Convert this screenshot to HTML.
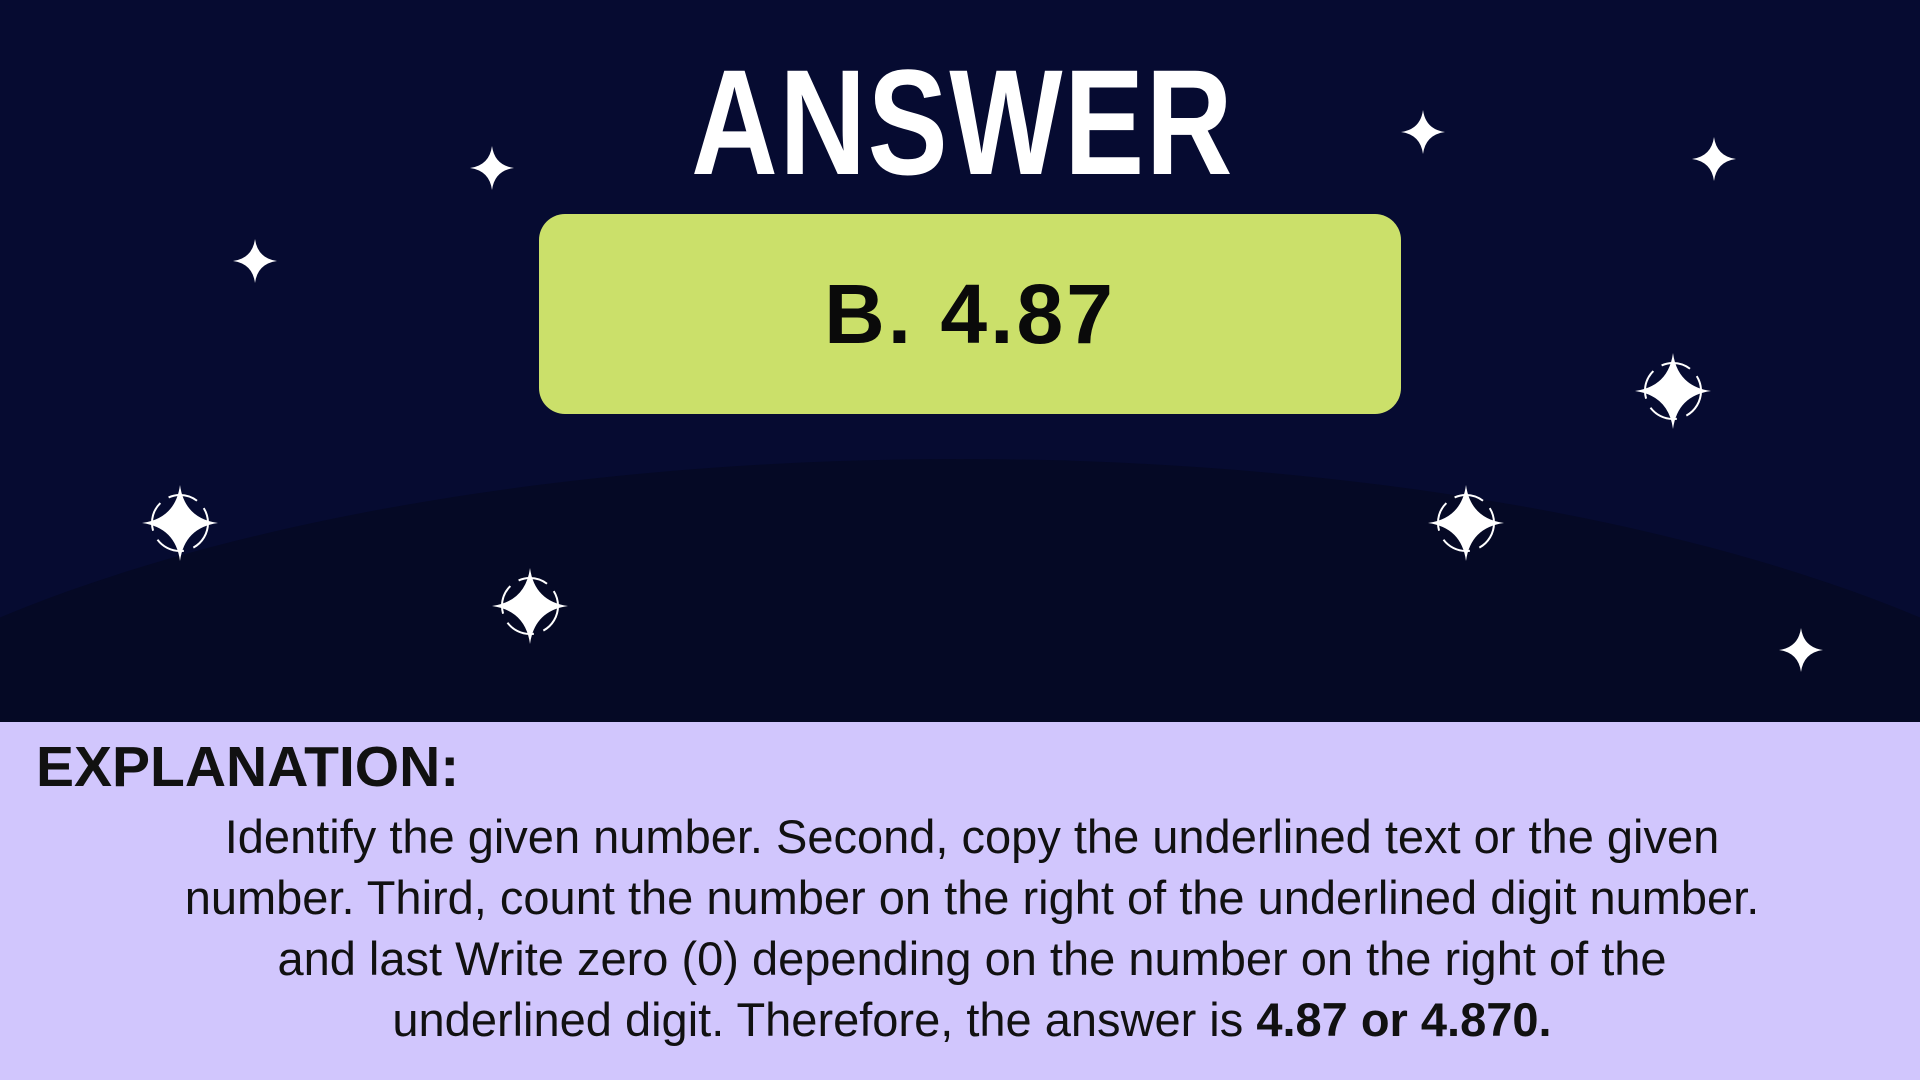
<!DOCTYPE html>
<html><head><meta charset="utf-8"><style>
html,body{margin:0;padding:0;width:1920px;height:1080px;overflow:hidden}
body{position:relative;background:#060b31;font-family:"Liberation Sans",sans-serif}
.sky{position:absolute;left:0;top:0;width:1920px;height:722px;overflow:hidden}
.hill{position:absolute;left:-300px;top:459px;width:2520px;height:900px;border-radius:50%;background:#050925}
.title{position:absolute;left:0;width:1920px;top:52px;text-align:center;color:#fff;font-weight:bold;font-size:150px;line-height:140px;transform:scaleX(0.8);transform-origin:973px 0;letter-spacing:2px}
.box{position:absolute;left:539px;top:214px;width:862px;height:200px;border-radius:26px;background:#cbe06a;text-align:center;font-weight:bold;font-size:84px;line-height:200px;color:#0a0a0a;letter-spacing:3px}
.bottom{position:absolute;left:0;top:722px;width:1920px;height:358px;background:#d1c6fd;overflow:hidden}
.exp{position:absolute;left:36px;top:12px;font-size:57px;font-weight:bold;color:#111}
.para{position:absolute;left:0;width:1920px;padding-left:24px;box-sizing:border-box;top:84px;text-align:center;font-size:47px;line-height:61px;color:#111}
svg{position:absolute;left:0;top:0}
</style></head><body>
<div class="sky">
<div class="hill"></div>
<div class="title">ANSWER</div>
<div class="box">B. 4.87</div>
<svg width="1920" height="722">
<defs>
<path id="s" d="M0,-1 Q0.12,-0.12 1,0 Q0.12,0.12 0,1 Q-0.12,0.12 -1,0 Q-0.12,-0.12 0,-1Z" fill="#fff"/>
</defs>
<g transform="translate(492,168) scale(22)"><use href="#s"/></g>
<g transform="translate(255,261) scale(22)"><use href="#s"/></g>
<g transform="translate(1423,132) scale(22)"><use href="#s"/></g>
<g transform="translate(1714,159) scale(22)"><use href="#s"/></g>
<g transform="translate(1801,650) scale(22)"><use href="#s"/></g>
<g fill="none" stroke="#fff" stroke-width="2" stroke-dasharray="30 10">
<circle cx="1673" cy="391" r="28"/><circle cx="180" cy="523" r="28"/><circle cx="530" cy="606" r="28"/><circle cx="1466" cy="523" r="28"/>
</g>
<g transform="translate(1673,391) scale(38)"><use href="#s"/></g>
<g transform="translate(180,523) scale(38)"><use href="#s"/></g>
<g transform="translate(530,606) scale(38)"><use href="#s"/></g>
<g transform="translate(1466,523) scale(38)"><use href="#s"/></g>
</svg>
</div>
<div class="bottom">
<div class="exp">EXPLANATION:</div>
<div class="para">Identify the given number. Second, copy the underlined text or the given<br>number. Third, count the number on the right of the underlined digit number.<br>and last Write zero (0) depending on the number on the right of the<br>underlined digit. Therefore, the answer is <b>4.87 or 4.870.</b></div>
</div>
</body></html>
